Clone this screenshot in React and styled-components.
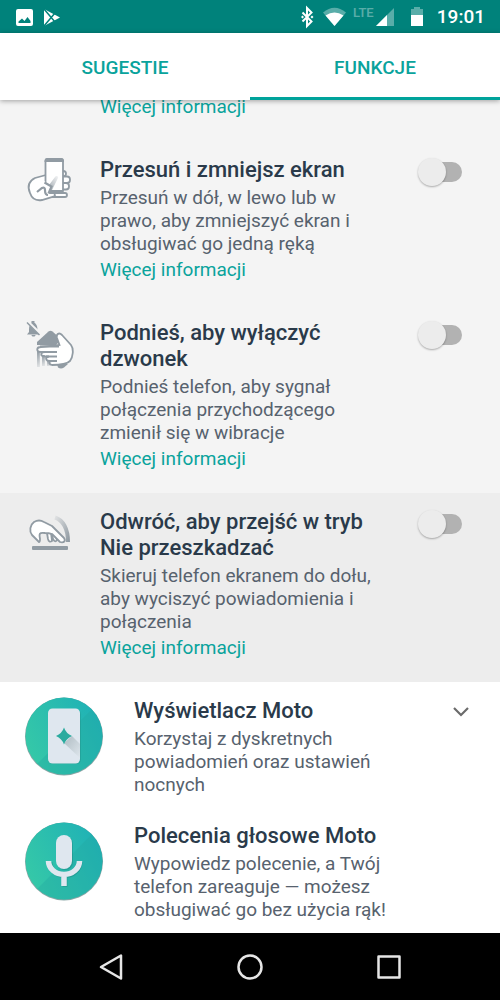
import { useState } from "react";
import styled, { createGlobalStyle } from "styled-components";

const gestures = [
  { id: "previous" },
  {
    id: "shrink",
    title: "Przesuń i zmniejsz ekran",
    text: "Przesuń w dół, w lewo lub w prawo, aby zmniejszyć ekran i obsługiwać go jedną ręką",
  },
  {
    id: "pickup",
    title: "Podnieś, aby wyłączyć dzwonek",
    text: "Podnieś telefon, aby sygnał połączenia przychodzącego zmienił się w wibracje",
  },
  {
    id: "flip",
    title: "Odwróć, aby przejść w tryb Nie przeszkadzać",
    text: "Skieruj telefon ekranem do dołu, aby wyciszyć powiadomienia i połączenia",
    active: true,
  },
];

const StatusIcons = () => (
  <svg width="128" height="24" viewBox="0 0 128 24" aria-hidden="true">
    <path
      d="M2.500 7.500l9 9-4.500 4.500V3l4.500 4.500-9 9"
      fill="none"
      stroke="#fff"
      strokeWidth="2"
    />
    <path d="M1 12l1.500-1.500L4 12l-1.500 1.500zM10.500 12l1.500-1.500 1.500 1.500-1.500 1.500z" fill="#fff" />
    <path d="M23 7.500Q34.500 -2 46 7.500L34.500 21z" fill="#fff" opacity=".35" />
    <path d="M25.500 10.500Q34.500 4.500 43.500 10.500L34.500 21z" fill="#fff" />
    <text
      x="53"
      y="12"
      fill="#fff"
      opacity=".35"
      fontFamily="Roboto, sans-serif"
      fontSize="13"
      fontWeight="500"
    >
      LTE
    </text>
    <path d="M76 21L94 3v18z" fill="#fff" opacity=".35" />
    <path d="M76 21L87 10v11z" fill="#fff" />
    <path d="M111 4h3V2h6v2h3v6h-12z" fill="#fff" opacity=".35" />
    <path d="M111 10h12v11h-12z" fill="#fff" />
  </svg>
);

const ShrinkIcon = () => (
  <svg width="50" height="50" viewBox="0 0 50 50" aria-hidden="true">
    <defs>
      <linearGradient id="swipe" x1="1" y1="0" x2="0" y2="1">
        <stop offset="0" stopColor="#919ba3" stopOpacity=".1" />
        <stop offset="1" stopColor="#919ba3" />
      </linearGradient>
    </defs>
    <g fill="#fff" stroke="#919ba3" strokeWidth="1.800">
      <rect x="34" y="14" width="8" height="5.500" rx="2.700" />
      <rect x="34" y="19.500" width="12" height="6.500" rx="3" />
      <rect x="34" y="26" width="11" height="6.500" rx="3" />
      <path d="M22 36h19a2 2 0 0 1 0 4H22z" />
      <path d="M22 18l-11 3c-6 3-8 8-5 15 2 6 6 8 12 7l13-4-2-11z" />
      <rect x="21.500" y="2" width="17.500" height="34" rx="2.500" />
    </g>
    <path d="M20.500 5V4c0-2 1-3 3-3H37c2 0 3 1 3 3v1zM22 33h17v4H22z" fill="#919ba3" />
    <path d="M31 20c1-2 4-1 3 1l-7 14-5-3z" fill="url(#swipe)" />
    <path d="M20 24l8 5-3 8-7 4-4-8z" fill="#fff" />
    <path
      d="M20.500 25.500l7 4-3 7M13 35l5-4c2-1 3 0 3 2 0 4 1 5 3 5"
      fill="none"
      stroke="#919ba3"
      strokeWidth="2.200"
    />
  </svg>
);

const PickupIcon = () => (
  <svg width="50" height="50" viewBox="0 0 50 50" aria-hidden="true">
    <defs>
      <linearGradient id="trail" x1="0" y1="0" x2="0" y2="1">
        <stop offset="0" stopColor="#919ba3" />
        <stop offset="1" stopColor="#919ba3" stopOpacity=".2" />
      </linearGradient>
    </defs>
    <path
      d="M8.500 2c4 1 5 4 5 8v2l2 2.500H3L5 12v-2c0-4 1-7 3.500-8zM7.500 15h4c0 2-4 2-4 0zM7.500 1h3v2h-3z"
      fill="#919ba3"
    />
    <path d="M4 2L16.500 14" stroke="#f4f4f4" strokeWidth="3" />
    <path d="M3 2.500L15.500 15" stroke="#919ba3" strokeWidth="1.500" />
    <path d="M13 25v-3l11.500-10.500q2-1.500 4 0l9 8-6 6z" fill="#919ba3" />
    <path
      d="M35.500 25L33 18c-1-4 2-6 5-3l9 10c3 4 2 12-1 16-4 4-12 4-18 4-4-1-3-4 0-4h-2c-5 0-5-4-1-4.500h-4c-5 0-5-4.500 0-4.500h-4c-5 0-5-5 0-5z"
      fill="#fff"
      stroke="#919ba3"
      strokeWidth="1.800"
    />
    <path d="M16 26.500h19M18 32h15M22 36.500h11M25 41h8" stroke="#919ba3" strokeWidth="1.800" />
    <path d="M33 44h11l-4 3.500q-3 2-6 0z" fill="#919ba3" />
    <g fill="url(#trail)">
      <rect x="13" y="31" width="2.800" height="16" />
      <rect x="18" y="35" width="2.800" height="11" />
      <rect x="23" y="40" width="2.800" height="6" />
    </g>
  </svg>
);

const FlipIcon = () => (
  <svg width="50" height="50" viewBox="0 0 50 50" aria-hidden="true">
    <defs>
      <linearGradient id="arc" x1="0" y1="0" x2="1" y2="1">
        <stop offset="0" stopColor="#919ba3" stopOpacity=".15" />
        <stop offset="1" stopColor="#919ba3" />
      </linearGradient>
    </defs>
    <path
      d="M31 8.500C39 11 44 20 44 33"
      fill="none"
      stroke="url(#arc)"
      strokeWidth="4"
    />
    <g fill="#fff" stroke="#919ba3" strokeWidth="1.800" strokeLinejoin="round">
      <path d="M23 24l1 6q1 4 4 2l-1-8zM28 25l1 5q2 4 4 1l-2-6z" />
      <path d="M15 33L8 26C5 22 6 16 10 13q5-3 10 0l8 4 12 12c2 3 0 5-4 4l-8-8q-3-1-7-1c-6-1-6 1-5 6 0 2 0 3-1 3z" />
    </g>
    <rect x="8" y="37" width="36" height="4" rx="1" fill="#919ba3" />
  </svg>
);

const Disc = ({ id, children }) => (
  <svg width="80" height="80" viewBox="0 0 80 80" aria-hidden="true">
    <defs>
      <linearGradient id={id} x1="0" y1=".75" x2="1" y2=".25">
        <stop offset="0" stopColor="#36c9a7" />
        <stop offset="1" stopColor="#1fb1b6" />
      </linearGradient>
      <clipPath id={`${id}-clip`}>
        <circle cx="40" cy="40" r="38.500" />
      </clipPath>
    </defs>
    <circle cx="40" cy="40.500" r="39" fill="#8aa5a5" />
    <circle cx="40" cy="40" r="38.500" fill={`url(#${id})`} />
    <path
      d="M0 81L81 0v81z"
      fill="#22a7a0"
      opacity=".35"
      clipPath={`url(#${id}-clip)`}
    />
    {children}
  </svg>
);

const DisplayIcon = () => (
  <Disc id="display">
    <defs>
      <linearGradient id="ray" x1="0" y1="0" x2="1" y2="1">
        <stop offset="0" stopColor="#aebbc2" />
        <stop offset="1" stopColor="#dfe7ed" />
      </linearGradient>
    </defs>
    <rect x="24" y="14" width="33" height="54" rx="4.500" fill="#208f88" opacity=".4" />
    <rect x="24" y="12.500" width="32" height="55" rx="4.500" fill="#dfe7ef" />
    <path d="M48 40l8 8v14L40 47z" fill="url(#ray)" />
    <path d="M40 31.500q2 6 8 8.500-6 2.500-8 8.500-2-6-8-8.500 6-2.500 8-8.500z" fill="#2bab9f" />
  </Disc>
);

const VoiceIcon = () => (
  <Disc id="voice">
    <g transform="translate(1 1)" opacity=".25">
      <rect x="32" y="14" width="16" height="34" rx="8" fill="#15625e" />
      <path d="M25 40a15 13.500 0 0 0 30 0M40 53v12" fill="none" stroke="#15625e" strokeWidth="5" />
    </g>
    <rect x="32" y="14" width="16" height="34" rx="8" fill="#dfe7ef" />
    <path
      d="M24.500 40a15.500 13.500 0 0 0 31 0M40 53v12"
      fill="none"
      stroke="#dfe7ef"
      strokeWidth="5.500"
    />
  </Disc>
);

const icons = { shrink: ShrinkIcon, pickup: PickupIcon, flip: FlipIcon };

const Gesture = ({ id, title, text, active }) => {
  const [on, setOn] = useState(false);
  const Icon = icons[id];

  if (!title) {
    return (
      <GestureRow>
        <GestureIcon />
        <GestureBody>
          <More href="#more">Więcej informacji</More>
        </GestureBody>
      </GestureRow>
    );
  }

  return (
    <GestureRow $active={active}>
      <GestureIcon>
        <Icon />
      </GestureIcon>
      <GestureBody>
        <Title id={`${id}-title`}>{title}</Title>
        <Text>{text}</Text>
        <More href="#more">Więcej informacji</More>
      </GestureBody>
      <Switch
        type="checkbox"
        role="switch"
        aria-labelledby={`${id}-title`}
        checked={on}
        onChange={(e) => setOn(e.target.checked)}
      />
    </GestureRow>
  );
};

const App = () => {
  const [tab, setTab] = useState("FUNKCJE");

  return (
    <Screen>
      <GlobalStyle />
      <StatusBar>
        <svg width="46" height="24" viewBox="0 0 46 24" aria-hidden="true">
          <path
            fillRule="evenodd"
            d="M2 4h13q2 0 2 2v13q0 2-2 2H2q-2 0-2-2V6q0-2 2-2zM2.500 18h12v-2l-3-4-3 4-2.500-2.500-3.500 3z"
            fill="#fff"
          />
          <path d="M28 4l16 8.500L28 21z" fill="#fff" />
          <path d="M28 4l11 13M28 21L39 8" stroke="#00827b" strokeWidth="1.500" />
        </svg>
        <StatusRight>
          <StatusIcons />
          <Clock>19:01</Clock>
        </StatusRight>
      </StatusBar>
      <Tabs role="tablist">
        {["SUGESTIE", "FUNKCJE"].map((name) => (
          <Tab
            key={name}
            role="tab"
            aria-selected={tab === name}
            $selected={tab === name}
            onClick={() => setTab(name)}
          >
            {name}
          </Tab>
        ))}
      </Tabs>
      <Content>
        {gestures.map((g) => (
          <Gesture key={g.id} {...g} />
        ))}
        <MotoList>
          <MotoRow>
            <DisplayIcon />
            <div>
              <Title>Wyświetlacz Moto</Title>
              <Text>Korzystaj z dyskretnych powiadomień oraz ustawień nocnych</Text>
            </div>
            <Expand aria-label="Rozwiń">
              <svg width="16" height="10" viewBox="0 0 16 10" aria-hidden="true">
                <path d="M1 1l7 7 7-7" fill="none" stroke="#6b6b6b" strokeWidth="2.200" />
              </svg>
            </Expand>
          </MotoRow>
          <MotoRow>
            <VoiceIcon />
            <div>
              <Title>Polecenia głosowe Moto</Title>
              <Text>
                Wypowiedz polecenie, a Twój telefon zareaguje — możesz obsługiwać go bez użycia rąk!
              </Text>
            </div>
          </MotoRow>
        </MotoList>
      </Content>
      <NavBar>
        <NavButton aria-label="Wstecz">
          <svg width="28" height="28" viewBox="0 0 28 28" aria-hidden="true">
            <path d="M24 2.500v23L4 14z" />
          </svg>
        </NavButton>
        <NavButton aria-label="Ekran główny">
          <svg width="28" height="28" viewBox="0 0 28 28" aria-hidden="true">
            <circle cx="14" cy="14" r="11.500" />
          </svg>
        </NavButton>
        <NavButton aria-label="Ostatnie aplikacje">
          <svg width="28" height="28" viewBox="0 0 28 28" aria-hidden="true">
            <rect x="3.500" y="3.500" width="21" height="21" />
          </svg>
        </NavButton>
      </NavBar>
    </Screen>
  );
};

export default App;

const GlobalStyle = createGlobalStyle`
  * {
    box-sizing: border-box;
  }
  body {
    margin: 0;
    font-family: Roboto, sans-serif;
    background: #f4f4f4;
  }
  button {
    padding: 0;
    border: none;
    background: none;
    font-family: inherit;
    cursor: pointer;
  }
  svg {
    display: block;
  }
`;

const Screen = styled.div`
  height: 100vh;
  display: flex;
  flex-direction: column;
`;

const StatusBar = styled.header`
  display: flex;
  align-items: center;
  justify-content: space-between;
  flex: none;
  height: 33px;
  padding: 0 15px 0 16px;
  background: #00827b;
`;

const StatusRight = styled.div`
  display: flex;
  align-items: center;
  gap: 9px;
`;

const Clock = styled.span`
  color: #fff;
  font-size: 19px;
  font-weight: 500;
`;

const Tabs = styled.div`
  display: flex;
  flex: none;
  height: 67px;
  background: #fff;
  box-shadow: 0 1px 5px rgba(0, 0, 0, 0.35);
  z-index: 1;
`;

const Tab = styled.button`
  flex: 1;
  padding-top: 4px;
  border-bottom: 3px solid ${({ $selected }) => ($selected ? "#00a39b" : "transparent")};
  color: #0aa39c;
  font-size: 19px;
  font-weight: 500;
`;

const Content = styled.main`
  display: flex;
  flex: 1;
  flex-direction: column;
  justify-content: flex-end;
  min-height: 0;
  overflow: hidden;
`;

const GestureRow = styled.section`
  display: grid;
  grid-template-columns: 76px 1fr 46px;
  flex: none;
  padding: 16px 37px 20px 24px;
  background: ${({ $active }) => ($active ? "#ededed" : "#f4f4f4")};
`;

const GestureIcon = styled.span`
  display: block;
`;

const GestureBody = styled.div`
  padding-right: 30px;
`;

const Title = styled.h2`
  margin: 0 0 3px;
  color: #2a3a4a;
  font-size: 22px;
  font-weight: 500;
  line-height: 26px;
`;

const Text = styled.p`
  margin: 0 0 1px;
  color: #57626e;
  font-size: 19px;
  line-height: 23px;
`;

const More = styled.a`
  display: block;
  color: #0aa39c;
  font-size: 19px;
  line-height: 28px;
  text-decoration: none;
`;

const Switch = styled.input`
  appearance: none;
  display: flex;
  align-items: center;
  width: 38px;
  height: 20px;
  margin: 5px 0 0 7px;
  border-radius: 10px;
  background: #b2b2b2;
  cursor: pointer;

  &::before {
    content: "";
    flex: none;
    width: 28px;
    height: 28px;
    margin-left: ${({ checked }) => (checked ? "16px" : "-6px")};
    border-radius: 50%;
    background: ${({ checked }) => (checked ? "#00a39b" : "#ececec")};
    box-shadow: 0 1px 2px rgba(0, 0, 0, 0.3);
  }
`;

const MotoList = styled.div`
  flex: none;
  padding-bottom: 1px;
  background: #fff;
`;

const MotoRow = styled.section`
  display: grid;
  grid-template-columns: 80px 1fr 46px;
  column-gap: 30px;
  padding: 16px 16px 10px 24px;

  > svg {
    margin-top: -2px;
  }
`;

const Expand = styled.button`
  display: flex;
  align-items: center;
  justify-content: center;
  height: 28px;
`;

const NavBar = styled.nav`
  display: flex;
  align-items: center;
  justify-content: space-around;
  flex: none;
  height: 67px;
  padding: 0 42px;
  background: #000;
`;

const NavButton = styled.button`
  svg {
    fill: none;
    stroke: #e6e6e6;
    stroke-width: 2.500px;
    stroke-linejoin: round;
  }
`;
